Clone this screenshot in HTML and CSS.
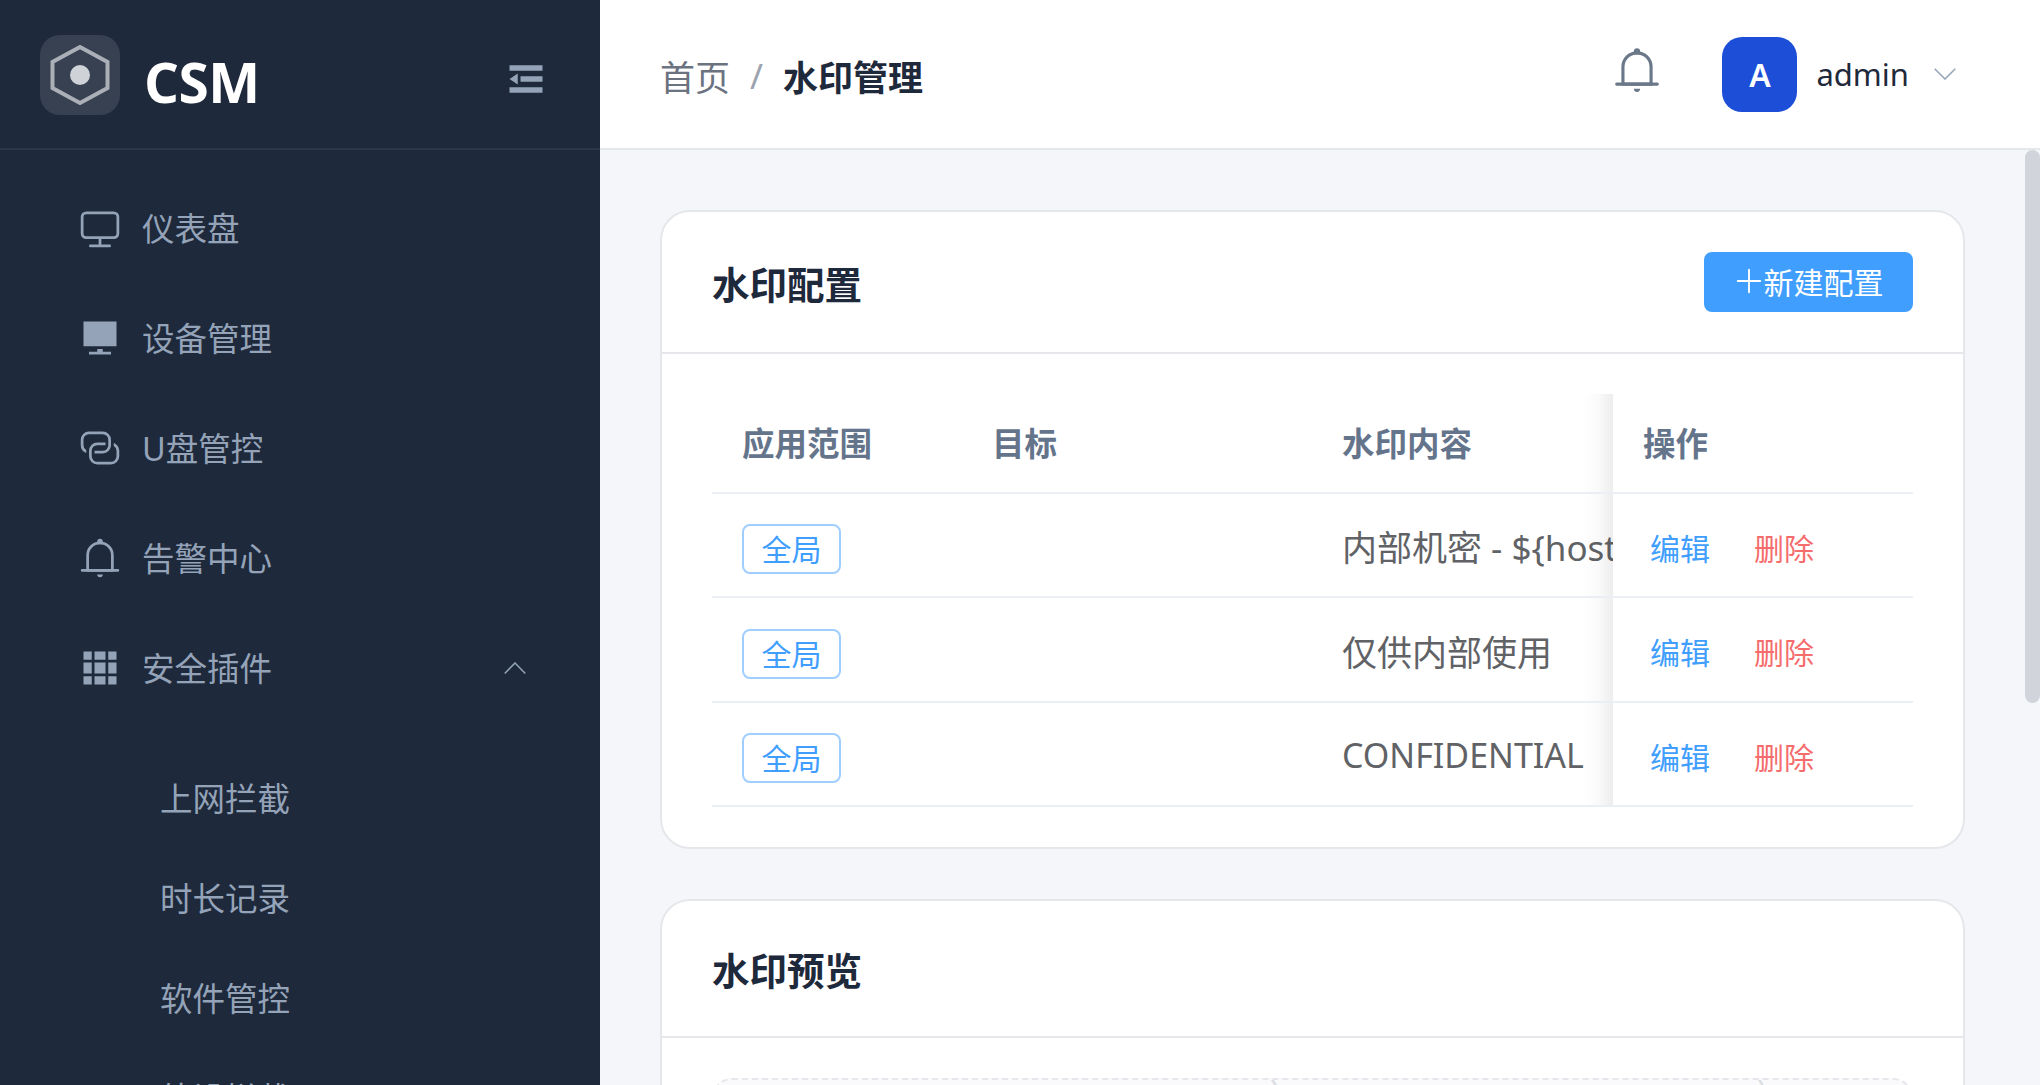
FILE: index.html
```html
<!DOCTYPE html>
<html lang="zh-CN">
<head>
<meta charset="utf-8">
<title>水印管理</title>
<link rel="stylesheet" href="styles.css">
</head>
<body>
<div class="app">
  <aside class="sidebar">
    <div class="brand">
      <div class="logo">
        <svg viewBox="0 0 60 60" class="logo-svg"><path class="hex" d="M30 2 57.500 17v26L30 58 2.500 43V17z"/><circle class="hex-dot" cx="30" cy="30" r="10"/></svg>
      </div>
      <span class="brand-name">CSM</span>
      <svg class="fold" viewBox="0 0 1024 1024"><path d="M896 192H128v128h768V192zm0 256H384v128h512V448zm0 256H128v128h768V704zM320 384 128 512l192 128V384z"/></svg>
    </div>
    <nav class="menu">
      <a class="item"><svg class="ico" viewBox="0 0 1024 1024"><path d="M544 768v128h192a32 32 0 1 1 0 64H288a32 32 0 1 1 0-64h192V768H192A128 128 0 0 1 64 640V256a128 128 0 0 1 128-128h640a128 128 0 0 1 128 128v384a128 128 0 0 1-128 128H544zM192 192a64 64 0 0 0-64 64v384a64 64 0 0 0 64 64h640a64 64 0 0 0 64-64V256a64 64 0 0 0-64-64H192z"/></svg><span class="label">仪表盘</span></a>
      <a class="item"><svg class="ico" viewBox="0 0 1024 1024"><path d="M448 832v-64h128v64h192v64H256v-64h192zM128 704V128h768v576H128z"/></svg><span class="label">设备管理</span></a>
      <a class="item"><svg class="ico" viewBox="0 0 1024 1024"><path d="M640 384v64H448a128 128 0 0 0-128 128v128a128 128 0 0 0 128 128h320a128 128 0 0 0 128-128V576a128 128 0 0 0-64-110.848V394.880c74.560 26.368 128 97.472 128 181.056v128a192 192 0 0 1-192 192H448a192 192 0 0 1-192-192V576a192 192 0 0 1 192-192h192z"/><path d="M384 640v-64h192a128 128 0 0 0 128-128V320a128 128 0 0 0-128-128H256a128 128 0 0 0-128 128v128a128 128 0 0 0 64 110.848v70.272A192.064 192.064 0 0 1 64 448V320a192 192 0 0 1 192-192h320a192 192 0 0 1 192 192v128a192 192 0 0 1-192 192H384z"/></svg><span class="label">U盘管控</span></a>
      <a class="item"><svg class="ico" viewBox="0 0 1024 1024"><path d="M512 64a64 64 0 0 1 64 64v64H448v-64a64 64 0 0 1 64-64z"/><path d="M256 768h512V448a256 256 0 1 0-512 0v320zm256-640a320 320 0 0 1 320 320v384H192V448a320 320 0 0 1 320-320z"/><path d="M96 768h832q32 0 32 32t-32 32H96q-32 0-32-32t32-32zm352 128h128a64 64 0 0 1-128 0z"/></svg><span class="label">告警中心</span></a>
      <a class="item"><svg class="ico" viewBox="0 0 1024 1024"><path d="M640 384v256H384V384h256zm64 0h192v256H704V384zm-64 512H384V704h256v192zm64 0V704h192v192H704zm-64-768v192H384V128h256zm64 0h192v192H704V128zM320 384v256H128V384h192zm0 512H128V704h192v192zm0-768v192H128V128h192z"/></svg><span class="label">安全插件</span><svg class="caret" viewBox="0 0 22 12"><path d="M.7 11.500 11 1l10.300 10.500"/></svg></a>
      <div class="sub">
        <a class="sub-item"><span class="label">上网拦截</span></a>
        <a class="sub-item"><span class="label">时长记录</span></a>
        <a class="sub-item"><span class="label">软件管控</span></a>
        <a class="sub-item"><span class="label">外设拦截</span></a>
      </div>
    </nav>
  </aside>
  <div class="right">
    <header class="topbar">
      <div class="crumbs"><span class="crumb">首页</span><span class="sep">/</span><strong class="crumb-now">水印管理</strong></div>
      <div class="tools">
        <svg class="top-bell" viewBox="0 0 1024 1024"><path d="M512 64a64 64 0 0 1 64 64v64H448v-64a64 64 0 0 1 64-64z"/><path d="M256 768h512V448a256 256 0 1 0-512 0v320zm256-640a320 320 0 0 1 320 320v384H192V448a320 320 0 0 1 320-320z"/><path d="M96 768h832q32 0 32 32t-32 32H96q-32 0-32-32t32-32zm352 128h128a64 64 0 0 1-128 0z"/></svg>
        <div class="avatar">A</div>
        <span class="user">admin</span>
        <svg class="user-caret" viewBox="0 0 22 12"><path d="M.7.700 11 11 21.300.700"/></svg>
      </div>
    </header>
    <main class="main">
      <section class="card">
        <div class="card-head">
          <h2>水印配置</h2>
          <button class="btn"><svg class="plus" viewBox="0 0 1024 1024"><path d="M480 480V128a32 32 0 0 1 64 0v352h352a32 32 0 0 1 0 64H544v352a32 32 0 1 1-64 0V544H128a32 32 0 0 1 0-64h352z"/></svg>新建配置</button>
        </div>
        <div class="card-body">
          <table class="tbl">
            <colgroup><col class="c1"><col class="c2"><col class="c3"><col class="c4"></colgroup>
            <thead>
              <tr><th>应用范围</th><th>目标</th><th class="th-content">水印内容</th><th class="fixed">操作</th></tr>
            </thead>
            <tbody>
              <tr><td><span class="tag">全局</span></td><td></td><td class="clip">内部机密 - ${hostname}</td><td class="fixed"><div class="ops"><a class="edit">编辑</a><a class="del">删除</a></div></td></tr>
              <tr><td><span class="tag">全局</span></td><td></td><td class="clip">仅供内部使用</td><td class="fixed"><div class="ops"><a class="edit">编辑</a><a class="del">删除</a></div></td></tr>
              <tr><td><span class="tag">全局</span></td><td></td><td class="clip caps">CONFIDENTIAL</td><td class="fixed"><div class="ops"><a class="edit">编辑</a><a class="del">删除</a></div></td></tr>
            </tbody>
          </table>
        </div>
      </section>
      <section class="card">
        <div class="card-head preview-head"><h2>水印预览</h2></div>
        <div class="card-body">
          <div class="preview">
            <span class="mark mark-a">内部机密</span>
            <span class="mark mark-b">内部机密</span>
          </div>
        </div>
      </section>
    </main>
    <div class="thumb"></div>
  </div>
</div>
</body>
</html>
```
FILE: styles.css
```css
* { box-sizing: border-box; }
html, body { margin: 0; height: 100%; overflow: hidden; }
body { font-family: "Noto Sans", "Noto Sans CJK SC", sans-serif; color: #1e293b; }
.app { display: flex; height: 1085px; }

.sidebar { width: 600px; flex: none; background: #1e293b; color: #94a3b8; overflow: hidden; }
.brand { height: 150px; border-bottom: 2px solid #2b3648; display: flex; align-items: center; padding: 0 52px 0 40px; }
.logo { width: 80px; height: 80px; margin-top: 2px; border-radius: 20px; background: #374151; display: flex; align-items: center; justify-content: center; }
.logo-svg { width: 60px; height: 60px; }
.hex { fill: none; stroke: #aaafb8; stroke-width: 4; }
.hex-dot { fill: #cfd2d7; }
.brand-name { margin: 14px 0 0 24px; font-family: "Open Sans", sans-serif; font-weight: 700; font-size: 55px; line-height: 1; color: #fff; letter-spacing: -.5px; }
.fold { width: 44px; height: 44px; margin: 9px 0 0 auto; fill: #94a3b8; }

.menu { padding-top: 23px; }
.item { height: 110px; display: flex; align-items: center; padding: 0 74px 0 78px; gap: 20px; font-size: 32.5px; }
.label { padding-bottom: 2px; }
.ico { width: 44px; height: 44px; flex: none; fill: #94a3b8; }
.caret { width: 22px; height: 12px; margin-left: auto; fill: none; stroke: #94a3b8; stroke-width: 1.500; }
.sub { padding-top: 25px; }
.sub-item { display: flex; align-items: center; height: 100px; padding-left: 160px; font-size: 32.5px; }

.right { position: relative; flex: 1; min-width: 0; display: flex; flex-direction: column; }
.topbar { height: 150px; flex: none; background: #fff; border-bottom: 2px solid #e5e7eb; display: flex; align-items: center; justify-content: space-between; padding: 0 84px 0 60px; }
.crumbs { display: flex; align-items: center; font-size: 35px; padding-top: 2px; }
.crumb { color: #6b7280; }
.sep { color: #9ca3af; margin: 0 20px; }
.crumb-now { color: #1e293b; font-weight: 700; }
.tools { display: flex; align-items: center; }
.top-bell { width: 50px; height: 50px; margin: 0 60px 8px 0; fill: #6b7889; }
.avatar { width: 75px; height: 75px; border-radius: 20px; background: #1d4ed8; color: #fff; display: flex; align-items: center; justify-content: center; font-size: 32px; font-weight: 600; }
.user { margin-left: 19px; font-size: 31px; color: #1e293b; }
.user-caret { width: 22px; height: 12px; margin-left: 25px; fill: none; stroke: #94a3b8; stroke-width: 1.500; }

.main { flex: 1; min-height: 0; overflow: hidden; background: #f4f6fa; padding: 60px 75px 60px 60px; }
.thumb { position: absolute; top: 150px; right: 0; width: 15px; height: 553px; border-radius: 8px; background: #d1d5db; }

.card { background: #fff; border: 2px solid #e5e7eb; border-radius: 30px; margin-bottom: 50px; }
.card:last-child { margin-bottom: 0; }
.card-head { height: 142px; display: flex; align-items: center; justify-content: space-between; padding: 0 50px; border-bottom: 2px solid #e5e7eb; }
.preview-head { height: 137px; }
.card-head h2 { margin: 0; font-size: 37.5px; font-weight: 700; color: #1e293b; }
.btn { display: flex; align-items: center; justify-content: center; width: 209px; height: 60px; padding: 0 0 3px; border: 0; border-radius: 8px; background: #409eff; color: #fff; font: inherit; font-size: 30px; }
.plus { width: 30px; height: 30px; fill: #fff; }
.card-body { padding: 40px 50px; }

.tbl { width: 1201px; table-layout: fixed; border-collapse: separate; border-spacing: 0; }
.c1 { width: 250px; } .c2 { width: 351px; } .c3 { width: 300px; } .c4 { width: 300px; }
.tbl th { height: 100px; padding: 0 30px 2px; text-align: left; font-size: 32.5px; font-weight: 700; color: #64748b; border-bottom: 2px solid #ebeef5; background: #fff; }
.tbl th.th-content { padding-left: 29px; }
.tbl td { height: 104px; padding: 8px 0 0 30px; font-size: 35px; color: #606266; border-bottom: 2px solid #ebeef5; background: #fff; white-space: nowrap; }
.tbl tbody tr:nth-child(2) td { height: 105px; }
.tbl td.clip { overflow: hidden; padding: 1px 0 0 29px; }
.tbl td.caps { font-size: 34px; }
.tbl td.fixed { padding-top: 3px; }
.fixed { position: relative; }
.fixed::before { content: ""; position: absolute; top: 0; bottom: 0; left: -30px; width: 30px; background: linear-gradient(to right, rgba(0,0,0,0), rgba(0,0,0,.02) 50%, rgba(0,0,0,.07)); }
.tag { display: inline-flex; align-items: center; justify-content: center; width: 99px; height: 50px; padding-bottom: 2px; border: 2px solid #a0cfff; border-radius: 8px; color: #409eff; font-size: 30px; }
.ops { display: flex; gap: 44px; padding-left: 7px; font-size: 30px; }
.edit { color: #409eff; }
.del { color: #f56c6c; }

.preview { position: relative; height: 551px; overflow: hidden; border: 2px dashed #e5e7eb; border-radius: 20px; background: #fafafc; }
.mark { position: absolute; font-size: 32px; color: #dcdde2; white-space: nowrap; transform: rotate(-30deg); }
.mark-a { left: 541px; top: -62px; }
.mark-b { left: 1028px; top: -62px; }
```
